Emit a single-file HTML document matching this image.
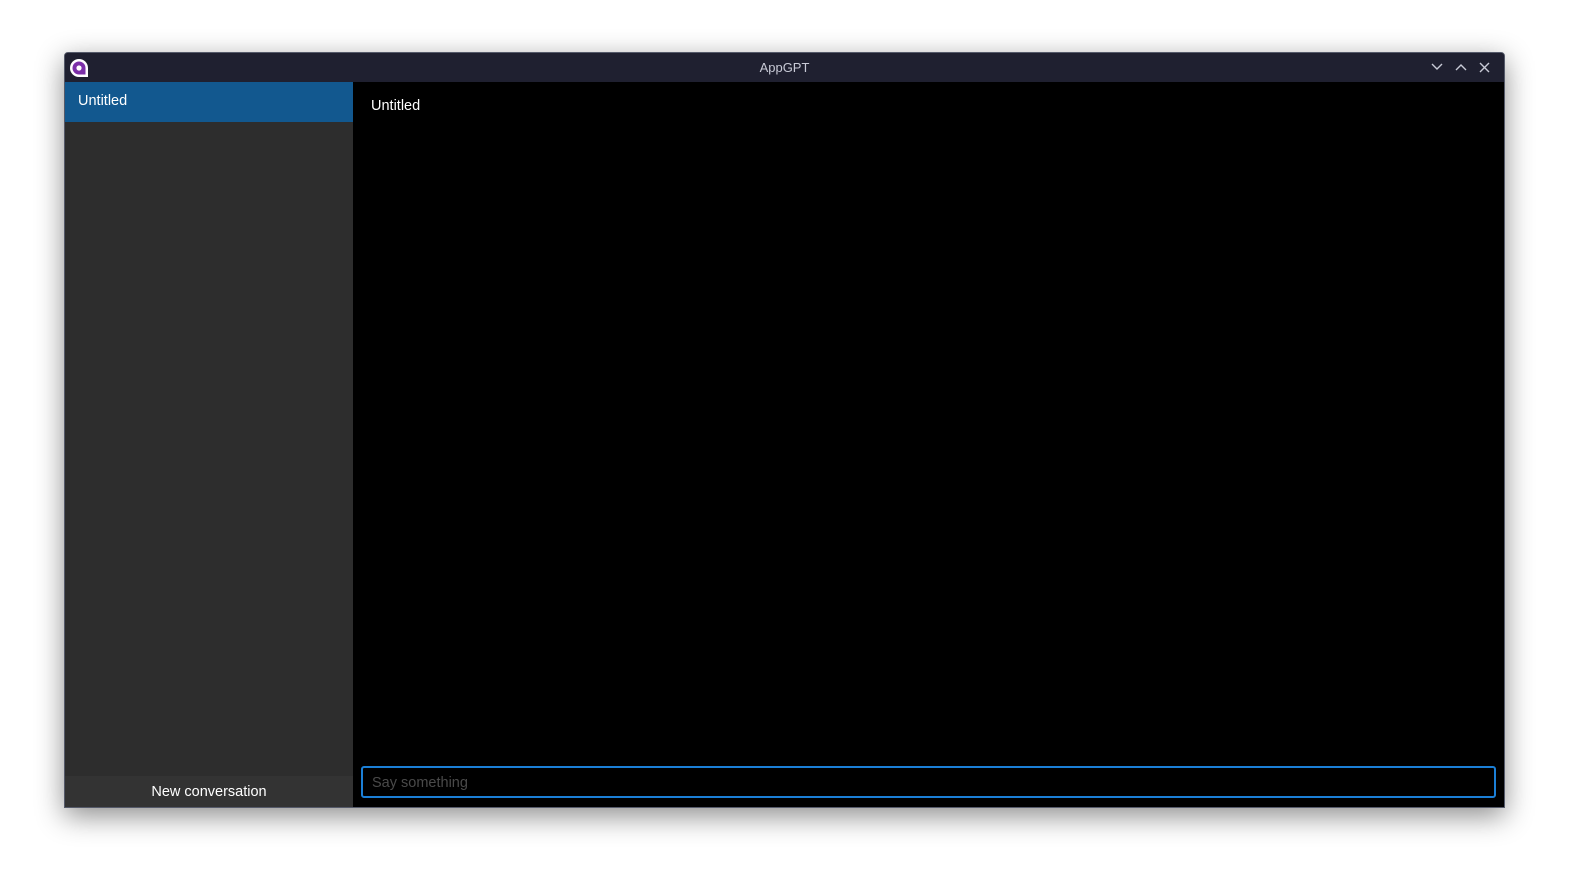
<!DOCTYPE html><html><head><meta charset="utf-8"><style>
body{margin:0;width:1570px;height:884px;background:#fff;overflow:hidden;font-family:"Liberation Sans","DejaVu Sans",sans-serif;}
.win{position:absolute;left:64px;top:52px;width:1441px;height:756px;background:#000;box-shadow:0 8px 28px rgba(0,0,0,.45);border:1px solid #555a6a;box-sizing:border-box;border-radius:4px 4px 0 0;overflow:hidden}
.tb{position:absolute;left:0;top:0;width:100%;height:29px;background:#1f2030;color:#c8cad6;font-size:13px;text-align:center;line-height:29px}
.side{position:absolute;left:0;top:29px;width:288px;bottom:0;background:#2d2d2d}
.sel{height:40px;background:#12588f;color:#fff;font-size:14.5px;line-height:38px;padding-left:13px}
.btn{position:absolute;bottom:0;left:0;width:100%;height:31px;background:#333;color:#fff;font-size:14.5px;text-align:center;line-height:33px}
.h{position:absolute;left:306px;top:45px;color:#fff;font-size:14.5px}
.inp{position:absolute;left:296px;top:713px;width:1135px;height:32px;border:2px solid #1b7fd6;border-radius:3px;box-sizing:border-box;color:#4a4a4a;font-size:14.5px;line-height:31px;padding-left:9px}
</style></head><body><div class="win">
<div class="tb">AppGPT
<svg style="position:absolute;left:4px;top:5px" width="20" height="20" viewBox="0 0 20 20"><path d="M10 1a9 9 0 1 0 0 18h9v-9a9 9 0 0 0-9-9z" fill="#fff"/><path d="M10 3.5a6.5 6.5 0 1 0 0 13h6.5v-6.5a6.5 6.5 0 0 0-6.5-6.5z" fill="#7b2fa8"/><circle cx="10" cy="10" r="2.6" fill="#fff"/></svg>
<svg style="position:absolute;right:0;top:0" width="80" height="29" viewBox="0 0 80 29" fill="none" stroke="#c8cad6" stroke-width="1.4"><path d="M8 11l5 5 5-5"/><path d="M32 17l5-5 5 5"/><path d="M56 10l9 9M65 10l-9 9"/></svg>
</div>
<div class="side"><div class="sel">Untitled</div><div class="btn">New conversation</div></div>
<div class="h">Untitled</div>
<div class="inp">Say something</div>
</div></body></html>
